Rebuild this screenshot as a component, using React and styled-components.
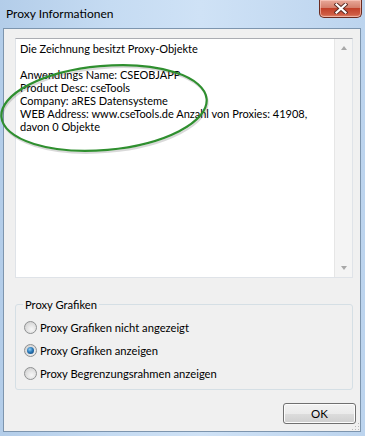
import React from "react";
import styled, { createGlobalStyle } from "styled-components";

const GlobalStyle = createGlobalStyle`
  html, body {
    margin: 0;
    padding: 0;
    background: #bcd4ee;
  }
  * { box-sizing: border-box; }
`;

const FONT = `Lato, "Liberation Sans", sans-serif`;

const Window = styled.div`
  position: relative;
  width: 365px;
  height: 436px;
  display: flex;
  flex-direction: column;
  background: linear-gradient(to right, #b3cde9 0%, #c5dbf2 30%, #cfe2f6 55%, #bcd4ee 100%);
  font-family: ${FONT};
  overflow: hidden;
`;

const TitleBar = styled.div`
  height: 28px;
  display: flex;
  align-items: flex-start;
  justify-content: space-between;
  padding: 0 3px 0 6px;
`;

const Title = styled.div`
  margin-top: 6px;
  font-size: 12px;
  color: #000;
`;

const CloseButton = styled.div`
  width: 43px;
  height: 18px;
  display: flex;
  align-items: center;
  justify-content: center;
  border: 1px solid #6b2b20;
  border-top: none;
  border-radius: 0 0 5px 5px;
  background: linear-gradient(to bottom, #e9a99a 0%, #d47f6c 45%, #c2412a 50%, #cf5c43 85%, #e08a70 100%);
  box-shadow: inset 0 0 0 1px rgba(255, 210, 200, 0.6);
`;

const Client = styled.div`
  position: relative;
  flex: 1;
  margin: 0 4px 4px 3px;
  border: 1px solid #7d95ae;
  background: #f0f0f0;
  padding: 9px 4px 0 11px;
  display: flex;
  flex-direction: column;
`;

const TextBox = styled.div`
  height: 240px;
  margin-right: 3px;
  display: flex;
  background: #fff;
  border: 1px solid #dfe3e8;
  border-top-color: #abadb3;
`;

const TextContent = styled.div`
  flex: 1;
  padding: 3px 4px;
  font-size: 11px;
  line-height: 13px;
  color: #000;
  white-space: pre-wrap;
`;

const ScrollBar = styled.div`
  width: 18px;
  display: flex;
  flex-direction: column;
  justify-content: space-between;
  align-items: center;
  background: #f4f4f4;
  border-left: 1px solid #e6e6e6;
  padding: 7px 0 7px;
`;

const Arrow = styled.div`
  width: 0;
  height: 0;
  border-left: 3.5px solid transparent;
  border-right: 3.5px solid transparent;
  ${({ $down }) =>
    $down
      ? "border-top: 4px solid #a8a8a8;"
      : "border-bottom: 4px solid #a8a8a8;"}
`;

const GroupBox = styled.fieldset`
  margin: 19px 3px 0 0;
  padding: 4px 9px 4px 8px;
  border: 1px solid #d5dfe5;
  border-radius: 3px;
  min-width: 0;
`;

const Legend = styled.legend`
  padding: 0 2px;
  margin-left: -1px;
  font-size: 11.2px;
  line-height: 15px;
  color: #000;
`;

const RadioRow = styled.label`
  display: flex;
  align-items: center;
  gap: 3px;
  height: 23px;
  font-size: 11.2px;
  line-height: 15px;
  color: #000;
`;

const RadioCircle = styled.span`
  width: 13px;
  height: 13px;
  border-radius: 50%;
  border: 1px solid #8f9192;
  background: radial-gradient(circle at 60% 65%, #f7f7f7 0%, #dcdcdc 60%, #c7c7c7 100%);
  display: flex;
  align-items: center;
  justify-content: center;
  &::after {
    content: "";
    display: ${({ $checked }) => ($checked ? "block" : "none")};
    width: 7px;
    height: 7px;
    border-radius: 50%;
    background: radial-gradient(circle at 40% 35%, #8fd0f7 0%, #2b79b8 45%, #0d3a6a 100%);
  }
`;

const Footer = styled.div`
  display: flex;
  justify-content: flex-end;
  margin-top: 13px;
`;

const OkButton = styled.div`
  width: 73px;
  height: 21px;
  display: flex;
  align-items: center;
  justify-content: center;
  font-size: 11.5px;
  color: #000;
  border: 1px solid #707070;
  border-radius: 3px;
  background: linear-gradient(to bottom, #f2f2f2 0%, #ebebeb 50%, #dddddd 51%, #cfcfcf 100%);
  box-shadow: inset 0 0 0 1px #fcfcfc;
`;

const Grip = styled.div`
  position: absolute;
  right: 1px;
  bottom: 1px;
  width: 8px;
  height: 8px;
  background-image: radial-gradient(circle, #b8b8b8 0.8px, transparent 1px);
  background-size: 3px 3px;
  clip-path: polygon(100% 0, 100% 100%, 0 100%);
`;

const Annotation = styled.svg`
  position: absolute;
  left: 0;
  top: 0;
  pointer-events: none;
`;

const options = [
  { label: "Proxy Grafiken nicht angezeigt", checked: false },
  { label: "Proxy Grafiken anzeigen", checked: true },
  { label: "Proxy Begrenzungsrahmen anzeigen", checked: false },
];

const text = `Die Zeichnung besitzt Proxy-Objekte

Anwendungs Name: CSEOBJAPP
Product Desc: cseTools
Company: aRES Datensysteme
WEB Address: www.cseTools.de Anzahl von Proxies: 41908,
davon 0 Objekte`;

export default function App() {
  return (
    <>
      <GlobalStyle />
      <Window>
        <TitleBar>
          <Title>Proxy Informationen</Title>
          <CloseButton>
            <svg width="14" height="11" viewBox="0 0 14 11">
              <path
                d="M2.5 1.5 L11.5 9.5 M11.5 1.5 L2.5 9.5"
                stroke="#5a2a22"
                strokeWidth="4"
                strokeLinecap="square"
              />
              <path
                d="M2.5 1.5 L11.5 9.5 M11.5 1.5 L2.5 9.5"
                stroke="#fff"
                strokeWidth="2.2"
                strokeLinecap="square"
              />
            </svg>
          </CloseButton>
        </TitleBar>
        <Client>
          <TextBox>
            <TextContent>{text}</TextContent>
            <ScrollBar>
              <Arrow />
              <Arrow $down />
            </ScrollBar>
          </TextBox>
          <GroupBox>
            <Legend>Proxy Grafiken</Legend>
            {options.map((o) => (
              <RadioRow key={o.label}>
                <RadioCircle $checked={o.checked} />
                {o.label}
              </RadioRow>
            ))}
          </GroupBox>
          <Footer>
            <OkButton>OK</OkButton>
          </Footer>
          <Grip />
        </Client>
        <Annotation width="365" height="436">
          <ellipse
            cx="105"
            cy="110"
            rx="103"
            ry="42"
            transform="rotate(-5 105 110)"
            fill="none"
            stroke="rgba(80,80,80,0.22)"
            strokeWidth="2"
          />
          <ellipse
            cx="104"
            cy="108"
            rx="103"
            ry="42"
            transform="rotate(-5 104 108)"
            fill="none"
            stroke="#2f8f2f"
            strokeWidth="2.2"
          />
        </Annotation>
      </Window>
    </>
  );
}
